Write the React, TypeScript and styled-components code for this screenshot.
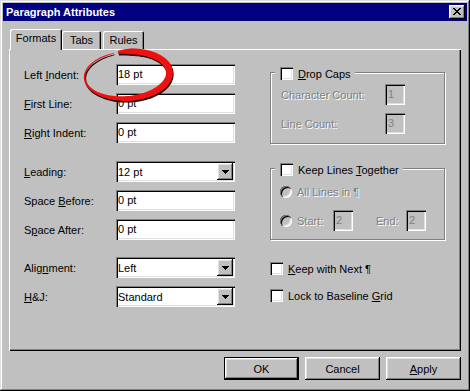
import React from "react";
import styled, { createGlobalStyle } from "styled-components";

const GlobalStyle = createGlobalStyle`
  html, body {
    margin: 0;
    padding: 0;
    background: #c0c0c0;
  }
  body {
    font-family: "Liberation Sans", Arial, sans-serif;
    font-size: 11px;
    color: #000;
  }
`;

const raised = `
  box-shadow: inset -1px -1px 0 #000, inset 1px 1px 0 #fff,
    inset -2px -2px 0 #808080, inset 2px 2px 0 #dfdfdf;
`;

const sunken = `
  box-shadow: inset 1px 1px 0 #808080, inset 2px 2px 0 #000,
    inset -1px -1px 0 #fff, inset -2px -2px 0 #dfdfdf;
`;

const Window = styled.div`
  position: relative;
  width: 470px;
  height: 391px;
  box-sizing: border-box;
  padding: 3px;
  background: #c0c0c0;
  box-shadow: inset -1px -1px 0 #000, inset 1px 1px 0 #dfdfdf,
    inset -2px -2px 0 #808080, inset 2px 2px 0 #fff;
  display: flex;
  flex-direction: column;
`;

const TitleBar = styled.div`
  flex: none;
  height: 18px;
  background: #000080;
  display: flex;
  align-items: center;
  justify-content: space-between;
  padding: 0 2px 0 3px;
`;

const Title = styled.span`
  color: #fff;
  font-weight: bold;
  font-size: 11px;
  line-height: 18px;
`;

const CloseButton = styled.div`
  width: 16px;
  height: 14px;
  box-sizing: border-box;
  padding: 3px 0 0 4px;
  background: #c0c0c0;
  ${raised}

  svg {
    display: block;
  }
`;

const Body = styled.div`
  flex: 1;
  display: flex;
  flex-direction: column;
  padding: 8px 6px 8px 6px;
  min-height: 0;
`;

const TabStrip = styled.div`
  flex: none;
  height: 20px;
  display: flex;
  align-items: flex-end;
  padding-left: 1px;
`;

const Tab = styled.div<{ $active?: boolean; $width: number; $offset?: number }>`
  position: relative;
  z-index: ${({ $active }) => ($active ? 1 : 0)};
  width: ${({ $width }) => $width}px;
  height: ${({ $active }) => ($active ? 21 : 18)}px;
  margin-bottom: ${({ $active }) => ($active ? -1 : 0)}px;
  margin-left: ${({ $offset }) => $offset ?? 0}px;
  box-sizing: border-box;
  padding-top: 3px;
  line-height: 13px;
  text-align: center;
  background: #c0c0c0;
  border-radius: 2px 2px 0 0;
  box-shadow: inset 1px 1px 0 #fff, inset -1px 0 0 #000, inset -2px 0 0 #808080;
`;

const Panel = styled.div`
  flex: 1;
  display: flex;
  background: #c0c0c0;
  box-shadow: inset 1px 1px 0 #fff, inset -1px -1px 0 #000,
    inset -2px -2px 0 #808080;
`;

const LeftColumn = styled.div`
  display: flex;
  flex-direction: column;
  padding: 15px 0 0 15px;
`;

const FieldGroup = styled.div<{ $top?: number }>`
  display: flex;
  flex-direction: column;
  gap: 8px;
  margin-top: ${({ $top }) => $top ?? 0}px;
`;

const Row = styled.div`
  display: flex;
  align-items: center;
  height: 21px;
`;

const FieldLabel = styled.span<{ $width: number; $disabled?: boolean; $indent?: number }>`
  width: ${({ $width }) => $width}px;
  margin-left: ${({ $indent }) => $indent ?? 0}px;
  flex: none;
  white-space: nowrap;
  color: ${({ $disabled }) => ($disabled ? "#808080" : "#000")};
  text-shadow: ${({ $disabled }) => ($disabled ? "1px 1px 0 #fff" : "none")};
`;

const U = styled.span`
  text-decoration: underline;
  text-underline-offset: 1px;
`;

const TextBox = styled.div`
  width: 119px;
  height: 21px;
  box-sizing: border-box;
  padding: 0 2px;
  background: #fff;
  line-height: 21px;
  ${sunken}
`;

const SmallBox = styled.div`
  width: 20px;
  height: 21px;
  flex: none;
  box-sizing: border-box;
  padding: 0 3px;
  background: #c0c0c0;
  color: #808080;
  line-height: 21px;
  ${sunken}
`;

const Select = styled.div`
  width: 119px;
  height: 21px;
  box-sizing: border-box;
  padding: 2px;
  background: #fff;
  display: flex;
  align-items: center;
  ${sunken}
`;

const SelectValue = styled.span`
  flex: 1;
`;

const DropButton = styled.div`
  width: 16px;
  height: 17px;
  background: #c0c0c0;
  display: flex;
  align-items: center;
  justify-content: center;
  ${raised}
`;

const RightColumn = styled.div`
  display: flex;
  flex-direction: column;
  padding-top: 23px;
  margin-left: 35px;
`;

const GroupBox = styled.div<{ $top?: number }>`
  width: 175px;
  height: 72px;
  box-sizing: border-box;
  margin-top: ${({ $top }) => $top ?? 0}px;
  border: 1px solid #808080;
  box-shadow: 1px 1px 0 #fff, inset 1px 1px 0 #fff;
  display: flex;
  flex-direction: column;
`;

const GroupTitle = styled.div`
  align-self: flex-start;
  height: 13px;
  margin: -6px 0 0 4px;
  padding: 0 4px 0 5px;
  background: #c0c0c0;
  display: flex;
  align-items: center;
  gap: 5px;
  white-space: nowrap;
`;

const GroupBody = styled.div<{ $top: number; $left: number }>`
  display: flex;
  flex-direction: column;
  gap: 8px;
  margin-top: ${({ $top }) => $top}px;
  padding-left: ${({ $left }) => $left}px;
`;

const CheckBox = styled.div`
  width: 13px;
  height: 13px;
  flex: none;
  background: #fff;
  ${sunken}
`;

const Radio = styled.div`
  width: 12px;
  height: 12px;
  flex: none;
  margin-right: 5px;
  border-radius: 50%;
  background: #c0c0c0;
  ${sunken}
`;

const CheckRow = styled.div<{ $top: number }>`
  display: flex;
  align-items: center;
  gap: 5px;
  height: 13px;
  margin-top: ${({ $top }) => $top}px;
  white-space: nowrap;
`;

const ButtonRow = styled.div`
  flex: none;
  display: flex;
  justify-content: flex-end;
  gap: 6px;
  margin-top: 6px;
`;

const Button = styled.div<{ $default?: boolean }>`
  width: 75px;
  height: 23px;
  box-sizing: border-box;
  display: flex;
  align-items: center;
  justify-content: center;
  background: #c0c0c0;
  ${({ $default }) =>
    $default
      ? `box-shadow: inset 0 0 0 1px #000, inset -2px -2px 0 #000, inset 2px 2px 0 #fff,
          inset -3px -3px 0 #808080, inset 3px 3px 0 #dfdfdf;`
      : raised}
`;

const MarkLayer = styled.svg`
  position: absolute;
  left: 0;
  top: 0;
  pointer-events: none;
`;

const Arrow = () => (
  <svg width="7" height="4" viewBox="0 0 7 4" shapeRendering="crispEdges">
    <polygon points="0,0 7,0 3.5,4" fill="#000" />
  </svg>
);

const CloseGlyph = () => {
  const rows = ["##....##", ".##..##.", "..####..", "...##...", "..####..", ".##..##.", "##....##"];
  return (
    <svg width="8" height="7" viewBox="0 0 8 7" shapeRendering="crispEdges">
      {rows.map((r, y) =>
        r.split("").map((c, x) => (c === "#" ? <rect key={`${x}-${y}`} x={x} y={y} width="1" height="1" fill="#000" /> : null))
      )}
    </svg>
  );
};

// brush stroke round the left indent value
const strokeOutline = (dx: number, dy: number) => {
  const cx = 127;
  const cy = 75;
  const rx = 42.5;
  const ry = 23.5;
  const rot = (-4 * Math.PI) / 180;
  const keys = [
    [-100, 3],
    [-82, 6],
    [-20, 7],
    [40, 6.5],
    [90, 5],
    [130, 3],
    [170, 1.6],
    [220, 1.2],
    [255, 0.8],
  ];
  const widthAt = (t: number) => {
    for (let i = 0; i < keys.length - 1; i++) {
      const [t0, w0] = keys[i];
      const [t1, w1] = keys[i + 1];
      if (t >= t0 && t <= t1) return w0 + ((w1 - w0) * (t - t0)) / (t1 - t0);
    }
    return 1;
  };
  const outer: number[][] = [];
  const inner: number[][] = [];
  for (let t = -100; t <= 255; t += 3) {
    const a = (t * Math.PI) / 180;
    const px = rx * Math.cos(a);
    const py = ry * Math.sin(a);
    let nx = ry * Math.cos(a);
    let ny = rx * Math.sin(a);
    const len = Math.hypot(nx, ny);
    nx /= len;
    ny /= len;
    const w = widthAt(t) / 2;
    outer.push([px + nx * w, py + ny * w]);
    inner.push([px - nx * w, py - ny * w]);
  }
  const tf = ([x, y]: number[]) => {
    const xr = x * Math.cos(rot) - y * Math.sin(rot);
    const yr = x * Math.sin(rot) + y * Math.cos(rot);
    return `${(cx + xr + dx).toFixed(2)},${(cy + yr + dy).toFixed(2)}`;
  };
  return "M" + [...outer, ...inner.reverse()].map(tf).join(" L") + " Z";
};

export default function App() {
  return (
    <>
      <GlobalStyle />
      <Window>
        <TitleBar>
          <Title>Paragraph Attributes</Title>
          <CloseButton>
            <CloseGlyph />
          </CloseButton>
        </TitleBar>
        <Body>
          <TabStrip>
            <Tab $active $width={52}>Formats</Tab>
            <Tab $width={39}>Tabs</Tab>
            <Tab $width={41} $offset={2}>Rules</Tab>
          </TabStrip>
          <Panel>
            <LeftColumn>
              <FieldGroup>
                <Row>
                  <FieldLabel $width={92}>Left <U>I</U>ndent:</FieldLabel>
                  <TextBox>18 pt</TextBox>
                </Row>
                <Row>
                  <FieldLabel $width={92}><U>F</U>irst Line:</FieldLabel>
                  <TextBox>0 pt</TextBox>
                </Row>
                <Row>
                  <FieldLabel $width={92}><U>R</U>ight Indent:</FieldLabel>
                  <TextBox>0 pt</TextBox>
                </Row>
              </FieldGroup>
              <FieldGroup $top={18}>
                <Row>
                  <FieldLabel $width={92}><U>L</U>eading:</FieldLabel>
                  <Select>
                    <SelectValue>12 pt</SelectValue>
                    <DropButton><Arrow /></DropButton>
                  </Select>
                </Row>
                <Row>
                  <FieldLabel $width={92}>Space <U>B</U>efore:</FieldLabel>
                  <TextBox>0 pt</TextBox>
                </Row>
                <Row>
                  <FieldLabel $width={92}>S<U>p</U>ace After:</FieldLabel>
                  <TextBox>0 pt</TextBox>
                </Row>
              </FieldGroup>
              <FieldGroup $top={17}>
                <Row>
                  <FieldLabel $width={92}>Alig<U>n</U>ment:</FieldLabel>
                  <Select>
                    <SelectValue>Left</SelectValue>
                    <DropButton><Arrow /></DropButton>
                  </Select>
                </Row>
                <Row>
                  <FieldLabel $width={92}><U>H</U>&amp;J:</FieldLabel>
                  <Select>
                    <SelectValue>Standard</SelectValue>
                    <DropButton><Arrow /></DropButton>
                  </Select>
                </Row>
              </FieldGroup>
            </LeftColumn>
            <RightColumn>
              <GroupBox>
                <GroupTitle>
                  <CheckBox />
                  <span><U>D</U>rop Caps</span>
                </GroupTitle>
                <GroupBody $top={4} $left={10}>
                  <Row>
                    <FieldLabel $width={104} $disabled>Character Count:</FieldLabel>
                    <SmallBox>1</SmallBox>
                  </Row>
                  <Row>
                    <FieldLabel $width={104} $disabled>Line Count:</FieldLabel>
                    <SmallBox>3</SmallBox>
                  </Row>
                </GroupBody>
              </GroupBox>
              <GroupBox $top={24}>
                <GroupTitle>
                  <CheckBox />
                  <span>Keep Lines <U>T</U>ogether</span>
                </GroupTitle>
                <GroupBody $top={5} $left={9}>
                  <Row>
                    <Radio />
                    <FieldLabel $width={120} $disabled>All Lines in ¶</FieldLabel>
                  </Row>
                  <Row>
                    <Radio />
                    <FieldLabel $width={36} $disabled>Start:</FieldLabel>
                    <SmallBox>2</SmallBox>
                    <FieldLabel $width={30} $indent={23} $disabled>End:</FieldLabel>
                    <SmallBox>2</SmallBox>
                  </Row>
                </GroupBody>
              </GroupBox>
              <CheckRow $top={22}>
                <CheckBox />
                <span><U>K</U>eep with Next ¶</span>
              </CheckRow>
              <CheckRow $top={14}>
                <CheckBox />
                <span>Lock to Baseline <U>G</U>rid</span>
              </CheckRow>
            </RightColumn>
          </Panel>
          <ButtonRow>
            <Button $default>OK</Button>
            <Button>Cancel</Button>
            <Button><span><U>A</U>pply</span></Button>
          </ButtonRow>
        </Body>
        <MarkLayer width="470" height="391" viewBox="0 0 470 391">
          <path d={strokeOutline(0.8, 1.6)} fill="#1a0202" />
          <path d={strokeOutline(0, 0)} fill="#f01010" />
        </MarkLayer>
      </Window>
    </>
  );
}
